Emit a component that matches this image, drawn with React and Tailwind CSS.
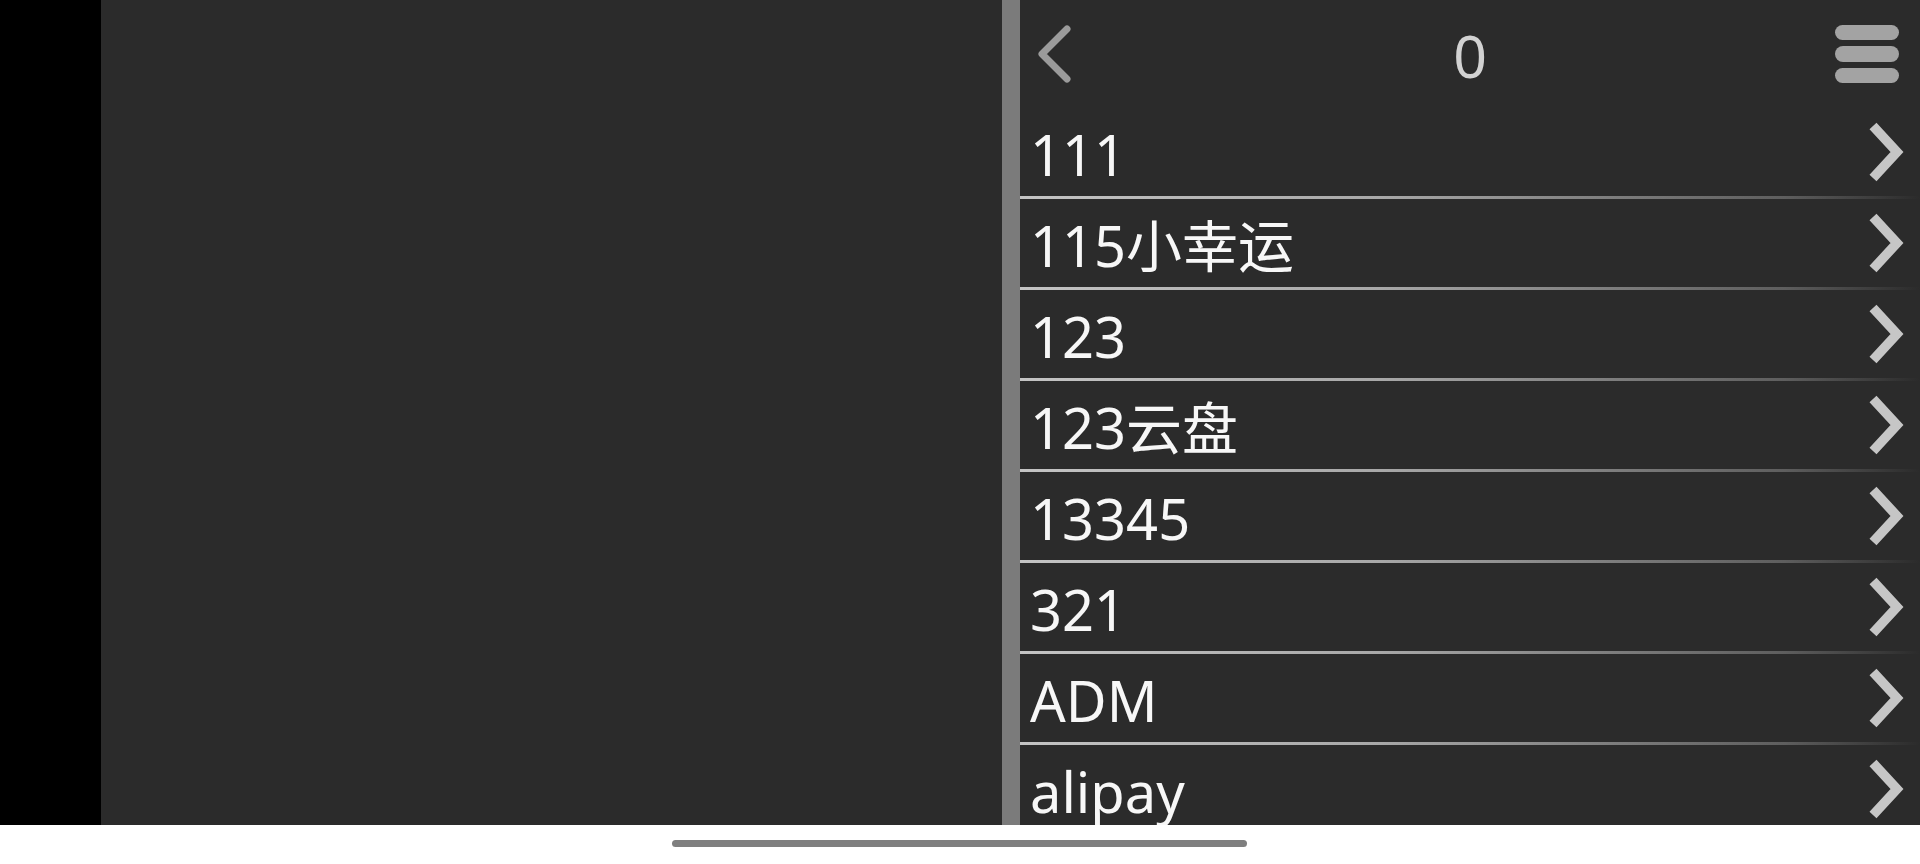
import React from "react";

const items = ["111", "115小幸运", "123", "123云盘", "13345", "321", "ADM", "alipay"];

const font = { fontFamily: '"Noto Sans", "Noto Sans CJK SC", sans-serif' };

function BackIcon() {
  return (
    <svg width="40" height="62" viewBox="0 0 40 62" className="block">
      <polyline
        points="32,6 7,31 32,56"
        fill="none"
        stroke="#9b9b9b"
        strokeWidth="7"
        strokeLinecap="round"
        strokeLinejoin="round"
      />
    </svg>
  );
}

function RowChevron() {
  return (
    <svg width="38" height="60" viewBox="0 0 38 60" className="block">
      <polyline
        points="5,4 29,30 5,56"
        fill="none"
        stroke="#c6c6c6"
        strokeWidth="9.5"
        strokeLinecap="butt"
        strokeLinejoin="miter"
      />
    </svg>
  );
}

function MenuIcon() {
  return (
    <div className="mr-[6px] flex w-[64px] flex-col gap-[6px]">
      <div className="h-[15px] rounded-full bg-[#a3a3a3]" />
      <div className="h-[16px] rounded-full bg-[#a3a3a3]" />
      <div className="h-[15px] rounded-full bg-[#a3a3a3]" />
    </div>
  );
}

function Row({ label }) {
  return (
    <div className="flex shrink-0 flex-col">
      <div className="flex h-[88px] shrink-0 items-center justify-between pl-[10px] pr-[14px]">
        <span className="pt-[4px] text-[56px] leading-none text-[#f7f7f7]" style={font}>
          {label}
        </span>
        <RowChevron />
      </div>
      <div className="h-[3px] shrink-0 bg-[linear-gradient(to_right,#c4c4c4_0%,#a8a8a8_40%,#5e5e5e_85%,#2b2b2b_100%)]" />
    </div>
  );
}

export default function App() {
  return (
    <div className="flex h-[864px] w-[1920px] flex-col overflow-hidden bg-white">
      <div className="flex h-[825px] shrink-0">
        <div className="w-[101px] bg-black" />
        <div className="w-[901px] bg-[#2b2b2b]" />
        <div className="w-[18px] bg-[#7b7b7b]" />
        <div className="flex flex-1 flex-col overflow-hidden bg-[#2b2b2b]">
          <div className="grid h-[108px] shrink-0 grid-cols-[1fr_auto_1fr] items-center px-[15px]">
            <div className="flex">
              <BackIcon />
            </div>
            <span className="pt-[2px] text-[59px] leading-none text-[#d2d2d2]" style={font}>
              0
            </span>
            <div className="flex justify-end">
              <MenuIcon />
            </div>
          </div>
          {items.map((label) => (
            <Row key={label} label={label} />
          ))}
        </div>
      </div>
      <div className="flex flex-1 pt-[15px] pl-[672px]">
        <div className="h-[7px] w-[575px] rounded-full bg-[#7f7f7f]" />
      </div>
    </div>
  );
}
